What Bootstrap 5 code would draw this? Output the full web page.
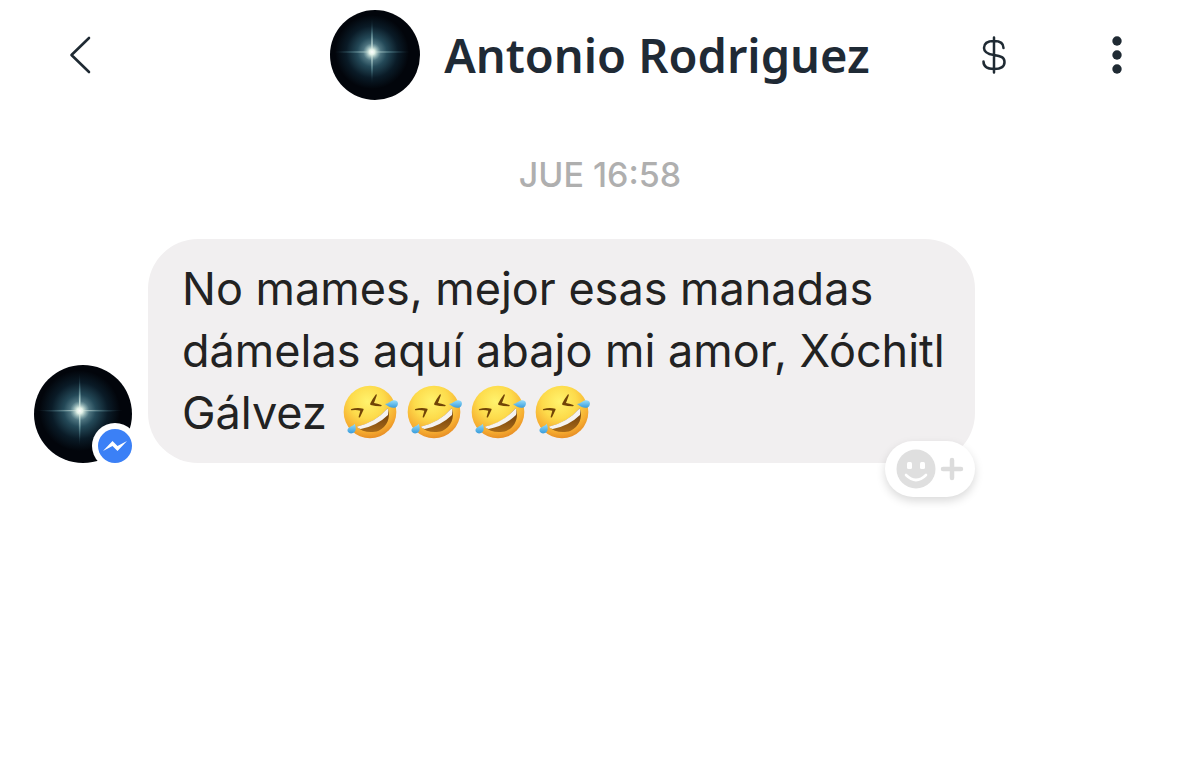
<!DOCTYPE html>
<html lang="es">
<head>
<meta charset="utf-8">
<meta name="viewport" content="width=device-width, initial-scale=1">
<title>Antonio Rodriguez</title>
<link href="https://cdn.jsdelivr.net/npm/bootstrap@5.3.0/dist/css/bootstrap.min.css" rel="stylesheet">
<style>
  body { background: #fff; color: #1f2a33; font-family: Inter, "Liberation Sans", sans-serif; }
  svg { display: block; }
  .chat-header { display: grid; grid-template-columns: 1fr auto 1fr; padding: 10px 64px 0 64px; }
  .chat-name { font: 600 47px/60px "Noto Sans", sans-serif; color: #1f2a35; }
  .icon-btn { border: 0; padding: 0; background: none; color: #1f2a33; }
  .header-actions { gap: 90px; }
  .photo-sm { width: 90px; height: 90px; }
  .photo-lg { width: 98px; height: 98px; }
  .stamp { font-size: 34px; line-height: 40px; margin-top: 55px; color: #afafaf; font-weight: 500; }
  .message-row { gap: 16px; margin-top: 44px; padding: 0 34px; }
  .bubble { max-width: 827px; padding: 19px 30px 19px 34px; border-radius: 50px; background: #f1eff0; }
  .bubble-text { font-size: 45px; line-height: 62px; color: #222; }
  .emoji { display: inline-block; width: 58px; height: 54px; margin: 0 3px; vertical-align: -10px; }
  .source-badge { right: -6px; bottom: -6px; }
  .react { position: absolute; right: 0; bottom: -34px; width: 90px; height: 56px; gap: 4px; border-radius: 28px; background: #fff; box-shadow: 0 4px 10px rgba(0,0,0,.15); }
</style>
</head>
<body class="min-vh-100">
<svg width="0" height="0" class="position-absolute" aria-hidden="true">
  <defs>
    <radialGradient id="haze">
      <stop offset="0" stop-color="#9dbdb9"/><stop offset=".15" stop-color="#648b95"/><stop offset=".4" stop-color="#244958"/><stop offset=".7" stop-color="#0a1b27"/><stop offset="1" stop-color="#02050b"/>
    </radialGradient>
    <radialGradient id="ray">
      <stop offset="0" stop-color="#fff"/><stop offset=".25" stop-color="#b6d1cf"/><stop offset=".6" stop-color="#55828c" stop-opacity=".6"/><stop offset="1" stop-color="#315464" stop-opacity="0"/>
    </radialGradient>
    <radialGradient id="core">
      <stop offset="0" stop-color="#fff"/><stop offset=".3" stop-color="#e3f2e8"/><stop offset="1" stop-color="#8ab0b0" stop-opacity="0"/>
    </radialGradient>
    <radialGradient id="skin" cx=".45" cy=".3" r=".72">
      <stop offset="0" stop-color="#fff36d"/><stop offset=".45" stop-color="#fddb4b"/><stop offset=".8" stop-color="#f6ad31"/><stop offset="1" stop-color="#e68a24"/>
    </radialGradient>
    <linearGradient id="mouth" x2="0" y2="1"><stop offset="0" stop-color="#653709"/><stop offset="1" stop-color="#a86a18"/></linearGradient>
    <linearGradient id="tear" x2="0" y2="1"><stop offset="0" stop-color="#95dcfa"/><stop offset="1" stop-color="#399ddc"/></linearGradient>
    <clipPath id="round"><circle cx="45" cy="45" r="45"/></clipPath>
    <symbol id="star" viewBox="0 0 90 90">
      <g clip-path="url(#round)">
        <rect width="90" height="90" fill="#02050b"/>
        <circle cx="42" cy="42" r="37" fill="url(#haze)"/>
        <ellipse cx="42" cy="42" rx="40" ry="1.500" fill="url(#ray)" opacity=".7"/>
        <path d="M42 7 44 42 42 75 40 42Z" fill="url(#ray)"/>
        <circle cx="42" cy="42" r="9" fill="url(#core)"/>
      </g>
    </symbol>
    <symbol id="rofl" viewBox="20 26 174 162">
      <circle cx="104" cy="107" r="79" fill="url(#skin)"/>
      <path d="M48 98 Q66 93 84 97 Q86 99 84 102 L74 123 Q70 125 70 121 L75 103 Q62 99 48 102 Q45 100 48 98Z" fill="#714407"/>
      <path d="M122 54 Q126 54 124 58 L116 80 Q126 82 138 86 Q141 89 137 90 Q120 90 106 86 Q103 84 105 81 Q112 67 122 54Z" fill="#714407"/>
      <path d="M64 151 Q119 141 157 96 C168 124 154 153 130 163 C106 172 79 166 64 151Z" fill="url(#mouth)"/>
      <path d="M64 151 Q120 139 157 96 Q161 105 158 116 Q124 149 76 158 Q69 156 64 151Z" fill="#f5f3f0"/>
      <path d="M149 83 C158 83 165 74 175 72 C187 70 192 83 184 91 C174 99 161 92 149 83Z" fill="url(#tear)"/>
      <path d="M58 142 C63 153 63 166 53 170 C43 174 34 167 37 159 C40 151 52 150 58 142Z" fill="url(#tear)"/>
    </symbol>
  </defs>
</svg>

<header class="chat-header align-items-center">
  <button class="icon-btn me-auto" type="button" aria-label="Volver">
    <svg width="32" height="40" viewBox="0 0 32 40" fill="none" stroke="currentColor" stroke-width="2.600" stroke-linecap="round" stroke-linejoin="round"><path d="M25 3 7.500 20 25 37"/></svg>
  </button>
  <div class="d-flex align-items-center gap-4">
    <svg class="photo-sm flex-shrink-0" aria-hidden="true"><use href="#star"/></svg>
    <h1 class="chat-name m-0 text-nowrap">Antonio Rodriguez</h1>
  </div>
  <div class="header-actions d-flex align-items-center justify-content-end">
    <button class="icon-btn" type="button" aria-label="Enviar dinero">
      <svg width="28" height="40" viewBox="0 0 28 40" fill="none" stroke="currentColor" stroke-width="2.500" stroke-linecap="round"><path d="M14 2.500V37.500M23.500 13C23.500 8 20 6 14 6 7 6 4 9 4 13 4 17 7 19 14 20 21 21 24.500 22.500 24.500 27 24.500 32 21 34 14 34 7 34 3.500 31 3.500 26.500"/></svg>
    </button>
    <button class="icon-btn" type="button" aria-label="Más opciones">
      <svg width="38" height="40" viewBox="0 0 38 40" fill="currentColor"><circle cx="19" cy="6" r="4.700"/><circle cx="19" cy="20" r="4.700"/><circle cx="19" cy="34" r="4.700"/></svg>
    </button>
  </div>
</header>

<main>
  <p class="stamp text-center mb-0"><time>JUE 16:58</time></p>
  <div class="message-row d-flex align-items-end">
    <div class="position-relative flex-shrink-0">
      <svg class="photo-lg" aria-hidden="true"><use href="#star"/></svg>
      <svg class="source-badge position-absolute" width="46" height="46" viewBox="0 0 46 46" role="img" aria-label="Messenger"><circle cx="23" cy="23" r="23" fill="#fff"/><circle cx="23" cy="23" r="17" fill="#3b80f6"/><path d="M11 28 20.500 18 25.500 23 35 18 25.500 28 20.500 23Z" fill="#fff"/></svg>
    </div>
    <div class="bubble position-relative">
      <p class="bubble-text mb-0">No mames, mejor esas manadas dámelas aquí abajo mi amor, Xóchitl Gálvez <span class="text-nowrap" role="img" aria-label="Cuatro caras riendo a carcajadas"><svg class="emoji"><use href="#rofl"/></svg><svg class="emoji"><use href="#rofl"/></svg><svg class="emoji"><use href="#rofl"/></svg><svg class="emoji"><use href="#rofl"/></svg></span></p>
      <button class="react icon-btn d-flex align-items-center justify-content-center" type="button" aria-label="Reaccionar">
        <svg width="40" height="40" viewBox="0 0 40 40"><circle cx="20" cy="20" r="19.500" fill="#dfdfdf"/><rect x="11" y="13" width="5" height="7" rx="1.500" fill="#fff"/><rect x="24" y="13" width="5" height="7" rx="1.500" fill="#fff"/><path d="M10 26Q20 36 30 26" fill="none" stroke="#fff" stroke-width="2.600" stroke-linecap="round"/></svg>
        <svg width="24" height="24" viewBox="0 0 24 24" stroke="#dcdcdc" stroke-width="4.500" stroke-linecap="round"><path d="M12 3V21M3 12H21"/></svg>
      </button>
    </div>
  </div>
</main>
<script src="https://cdn.jsdelivr.net/npm/bootstrap@5.3.0/dist/js/bootstrap.bundle.min.js"></script>
</body>
</html>
